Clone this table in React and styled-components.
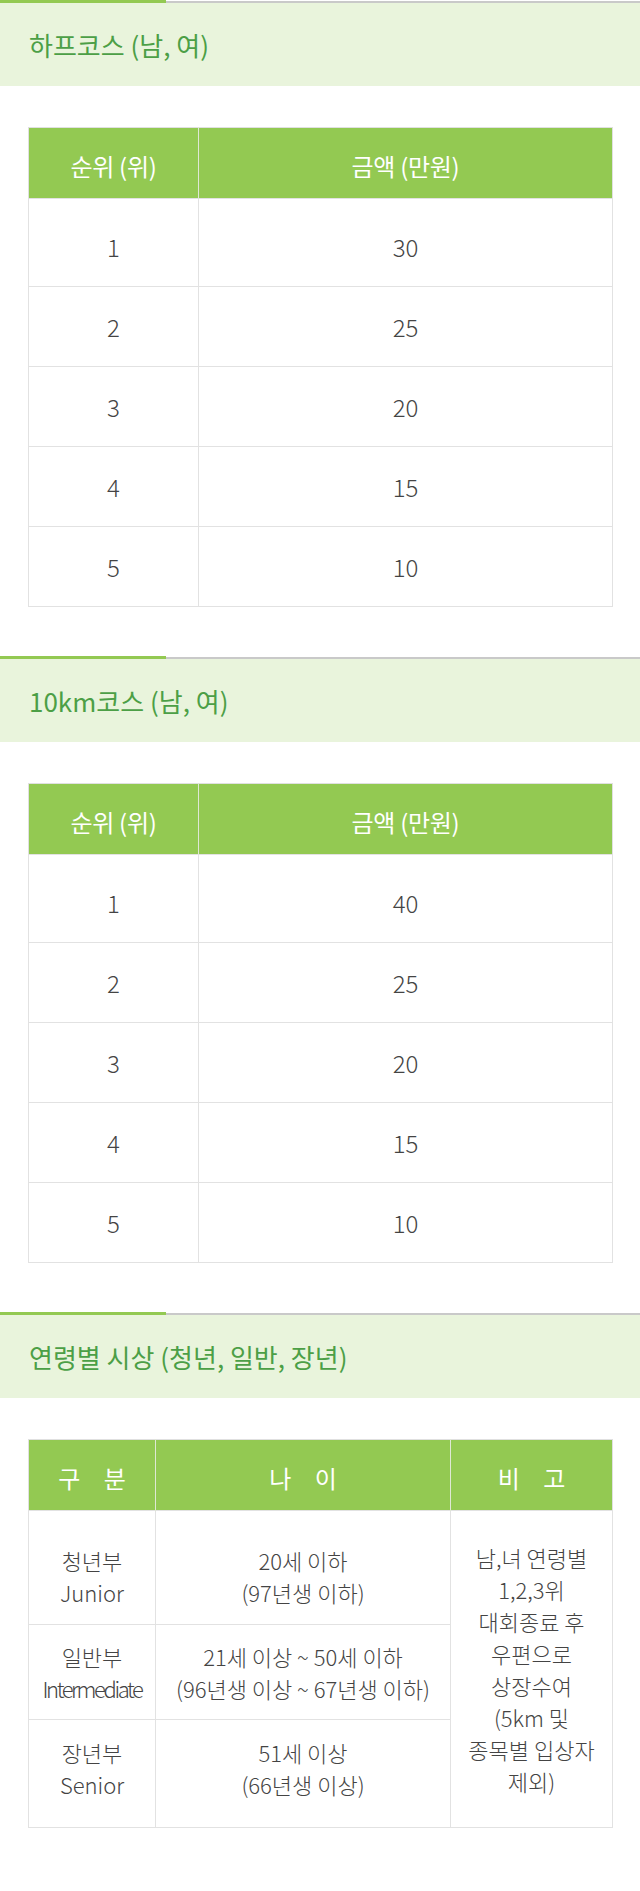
import React from 'react';
import styled, { createGlobalStyle } from 'styled-components';

const GlobalStyle = createGlobalStyle`
  html, body {
    margin: 0;
    padding: 0;
    background: #fff;
  }
  body {
    font-family: "Noto Sans CJK KR", "Noto Sans", sans-serif;
    color: #444;
  }
`

const Page = styled.div`
  width: 640px;
  padding: 1px 0 62px;
`

const Section = styled.section`
  & + & {
    margin-top: 50px;
  }
`

const TitleBand = styled.div`
  position: relative;
  height: 83px;
  display: flex;
  align-items: center;
  padding-left: 29px;
  background: #e9f4dc;
  border-top: 2px solid #c9c9c9;

  &::before {
    content: "";
    position: absolute;
    left: 0;
    top: -3px;
    width: 166px;
    height: 3px;
    background: #93c952;
  }
`

const Title = styled.h2`
  margin: 0;
  font-size: 26px;
  font-weight: 400;
  letter-spacing: 0;
  color: #4c9f46;
`

const Table = styled.table`
  width: 585px;
  margin: 41px 0 0 28px;
  border-collapse: collapse;
  table-layout: fixed;
  border: 1px solid #e0e0e0;
`

const HeadCell = styled.th`
  height: 71px;
  padding: 4px 0 0 ${p => p.spaced ? '9px' : '0'};
  box-sizing: border-box;
  background: #93c952;
  color: #fff;
  font-size: 24px;
  font-weight: 400;
  letter-spacing: ${p => p.spaced ? '9px' : '-0.3px'};
  text-align: center;
  border-left: 1px solid #dfe8d4;
  &:first-child {
    border-left: 0;
  }
`

const Row = styled.tr`
  height: ${p => p.h}px;
`

const Cell = styled.td`
  padding: ${p => p.pad || '0'};
  font-size: ${p => p.size || 22}px;
  font-weight: 300;
  line-height: 32px;
  letter-spacing: 0;
  text-align: center;
  vertical-align: middle;
  border: 1px solid #e2e2e2;
`

const Tight = styled.span`
  letter-spacing: -2.4px;
`

const prizeRows = (amounts) => amounts.map((amount, index) => ({ rank: index + 1, amount }))

const PrizeTable = ({ title, amounts }) => (
  <Section>
    <TitleBand>
      <Title>{title}</Title>
    </TitleBand>
    <Table>
      <colgroup>
        <col style={{ width: 170 }} />
        <col />
      </colgroup>
      <thead>
        <tr>
          <HeadCell>순위 (위)</HeadCell>
          <HeadCell>금액 (만원)</HeadCell>
        </tr>
      </thead>
      <tbody>
        {prizeRows(amounts).map((row, index) => (
          <Row key={row.rank} h={index === 0 ? 88 : 80}>
            <Cell size={24} pad={index === 0 ? '8px 0 0' : '0'}>{row.rank}</Cell>
            <Cell size={24} pad={index === 0 ? '8px 0 0' : '0'}>{row.amount}</Cell>
          </Row>
        ))}
      </tbody>
    </Table>
  </Section>
)

const App = () => (
  <Page>
    <GlobalStyle />
    <PrizeTable title="하프코스 (남, 여)" amounts={[30, 25, 20, 15, 10]} />
    <PrizeTable title="10km코스 (남, 여)" amounts={[40, 25, 20, 15, 10]} />
    <Section>
      <TitleBand>
        <Title>연령별 시상 (청년, 일반, 장년)</Title>
      </TitleBand>
      <Table>
        <colgroup>
          <col style={{ width: 127 }} />
          <col style={{ width: 295 }} />
          <col />
        </colgroup>
        <thead>
          <tr>
            <HeadCell spaced>구 분</HeadCell>
            <HeadCell spaced>나 이</HeadCell>
            <HeadCell spaced>비 고</HeadCell>
          </tr>
        </thead>
        <tbody>
          <Row h={114}>
            <Cell pad="16px 0 0">청년부<br />Junior</Cell>
            <Cell pad="16px 0 0">20세 이하<br />(97년생 이하)</Cell>
            <Cell rowSpan={3}>
              남,녀 연령별<br />1,2,3위<br />대회종료 후<br />우편으로<br />상장수여<br />(5km 및<br />종목별 입상자<br />제외)
            </Cell>
          </Row>
          <Row h={95}>
            <Cell>일반부<br /><Tight>Intermediate</Tight></Cell>
            <Cell>21세 이상 ~ 50세 이하<br />(96년생 이상 ~ 67년생 이하)</Cell>
          </Row>
          <Row h={108}>
            <Cell pad="0 0 12px">장년부<br />Senior</Cell>
            <Cell pad="0 0 12px">51세 이상<br />(66년생 이상)</Cell>
          </Row>
        </tbody>
      </Table>
    </Section>
  </Page>
);

export default App;
